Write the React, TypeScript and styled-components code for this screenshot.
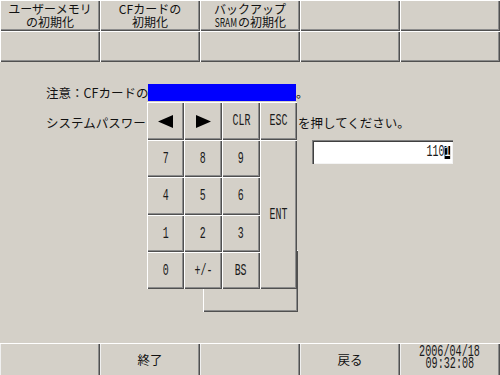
import React from "react";
import styled, { createGlobalStyle } from "styled-components";

const GlobalStyle = createGlobalStyle`
  html, body { margin: 0; padding: 0; background: #d4d0c8; }
  body {
    width: 500px; height: 375px; overflow: hidden;
    font-family: "Noto Sans CJK JP", "Noto Sans", sans-serif;
    color: #111;
  }
`;

const raised = `
  background: #d4d0c8;
  box-shadow: inset 1px 1px 0 #ffffff, inset -1px -1px 0 #505050, inset -2px -2px 0 #8c8c8c;
`;

const Screen = styled.div`
  width: 500px;
  height: 375px;
  display: flex;
  flex-direction: column;
  background: #d4d0c8;
  overflow: hidden;
`;

const MenuGrid = styled.div`
  display: grid;
  grid-template-columns: repeat(5, 100px);
  grid-template-rows: 31px 31px;
`;

const MenuButton = styled.div`
  ${raised}
  display: flex;
  flex-direction: column;
  align-items: center;
  justify-content: center;
  font-size: 12px;
  line-height: 13px;
  white-space: nowrap;
  padding-bottom: 1px;
`;

const Squeeze = styled.span`
  display: inline-block;
  transform: scaleX(0.7);
  margin: 0 -4px;
`;

const Content = styled.div`
  flex: 1;
  position: relative;
  padding: 22px 0 0 46px;
  font-size: 12.5px;
`;

const Row = styled.div`
  display: flex;
  align-items: center;
  height: 17px;
  white-space: nowrap;
`;

const MessageLabel = styled.span`
  width: 102px;
  flex: none;
  overflow: hidden;
`;

const Highlight = styled.span`
  flex: none;
  width: 148px;
  height: 17px;
  background: #0000ff;
`;

const PromptRow = styled(Row)`
  margin-top: 13px;
`;

const PromptLabel = styled.span`
  width: 252px;
  flex: none;
  overflow: hidden;
`;

const InputRow = styled.div`
  margin: 9px 0 0 266px;
`;

const InputBox = styled.div`
  width: 141px;
  height: 24px;
  box-sizing: border-box;
  background: #ffffff;
  box-shadow: inset 1px 1px 0 #808080, inset 2px 2px 0 #404040, inset -1px -1px 0 #f4f4f4;
  display: flex;
  align-items: center;
  justify-content: flex-end;
  padding: 1px 3px 0 0;
`;

const Mono = styled.span<{ $origin?: string }>`
  display: inline-block;
  font-family: "Liberation Mono", "DejaVu Sans Mono", monospace;
  font-size: 16px;
  line-height: 12px;
  color: #1a1a1a;
  transform: scaleX(0.62);
  transform-origin: ${(p) => p.$origin ?? "center"};
`;

const DateLine = styled(Mono)`
  font-size: 14.5px;
  line-height: 12px;
  transform: scale(0.7, 1.08);
`;

const Cursor = styled.span`
  display: inline-block;
  background: #000;
  color: #fff;
  line-height: 13px;
`;

const BackPanel = styled.div`
  ${raised}
  position: absolute;
  left: 203px;
  top: 188px;
  width: 95px;
  height: 62px;
`;

const Keypad = styled.div`
  position: absolute;
  left: 147px;
  top: 40px;
  display: grid;
  grid-template-columns: 37px 38px 38px 37px;
  grid-template-rows: 38px 37px 38px 37px 37px;
`;

const Key = styled.div<{ $tall?: boolean }>`
  ${raised}
  display: flex;
  align-items: center;
  justify-content: center;
  grid-column: ${(p) => (p.$tall ? "4" : "auto")};
  grid-row: ${(p) => (p.$tall ? "2 / span 4" : "auto")};
`;

const BottomBar = styled.div`
  display: grid;
  grid-template-columns: repeat(5, 100px);
  height: 32px;
`;

const BarButton = styled.div`
  background: #d4d0c8;
  box-shadow: inset 0 1px 0 #ffffff, inset 1px 0 0 #f0f0f0, inset -1px 0 0 #505050, inset -2px 0 0 #8c8c8c;
  display: flex;
  flex-direction: column;
  align-items: center;
  justify-content: center;
  font-size: 12.5px;
  padding-top: 1px;
`;

const DateStack = styled.div`
  display: flex;
  flex-direction: column;
  align-items: center;
  margin-top: -3px;
`;

const Arrow = ({ dir }: { dir: "left" | "right" }) => (
  <svg width="15" height="13" viewBox="0 0 15 13">
    {dir === "left" ? (
      <polygon points="0,6.5 15,0 15,13" fill="#000" />
    ) : (
      <polygon points="15,6.5 0,0 0,13" fill="#000" />
    )}
  </svg>
);

const keys = ["7", "8", "9", "4", "5", "6", "1", "2", "3", "0", "+/-", "BS"];

export default function App() {
  return (
    <Screen>
      <GlobalStyle />
      <MenuGrid>
        <MenuButton>
          <span>ユーザーメモリ</span>
          <span>の初期化</span>
        </MenuButton>
        <MenuButton>
          <span>CFカードの</span>
          <span>初期化</span>
        </MenuButton>
        <MenuButton>
          <span>バックアップ</span>
          <span>
            <Squeeze>SRAM</Squeeze>の初期化
          </span>
        </MenuButton>
        <MenuButton />
        <MenuButton />
        <MenuButton />
        <MenuButton />
        <MenuButton />
        <MenuButton />
        <MenuButton />
      </MenuGrid>

      <Content>
        <Row>
          <MessageLabel>注意：CFカードの</MessageLabel>
          <Highlight />
          <span>。</span>
        </Row>
        <PromptRow>
          <PromptLabel>システムパスワー</PromptLabel>
          <span>を押してください。</span>
        </PromptRow>
        <InputRow>
          <InputBox>
            <Mono $origin="right">
              110<Cursor>1</Cursor>
            </Mono>
          </InputBox>
        </InputRow>

        <BackPanel />
        <Keypad>
          <Key>
            <Arrow dir="left" />
          </Key>
          <Key>
            <Arrow dir="right" />
          </Key>
          <Key>
            <Mono>CLR</Mono>
          </Key>
          <Key>
            <Mono>ESC</Mono>
          </Key>
          <Key $tall>
            <Mono>ENT</Mono>
          </Key>
          {keys.map((k) => (
            <Key key={k}>
              <Mono>{k}</Mono>
            </Key>
          ))}
        </Keypad>
      </Content>

      <BottomBar>
        <BarButton />
        <BarButton>終了</BarButton>
        <BarButton />
        <BarButton>戻る</BarButton>
        <BarButton>
          <DateStack>
            <DateLine>2006/04/18</DateLine>
            <DateLine>09:32:08</DateLine>
          </DateStack>
        </BarButton>
      </BottomBar>
    </Screen>
  );
}
